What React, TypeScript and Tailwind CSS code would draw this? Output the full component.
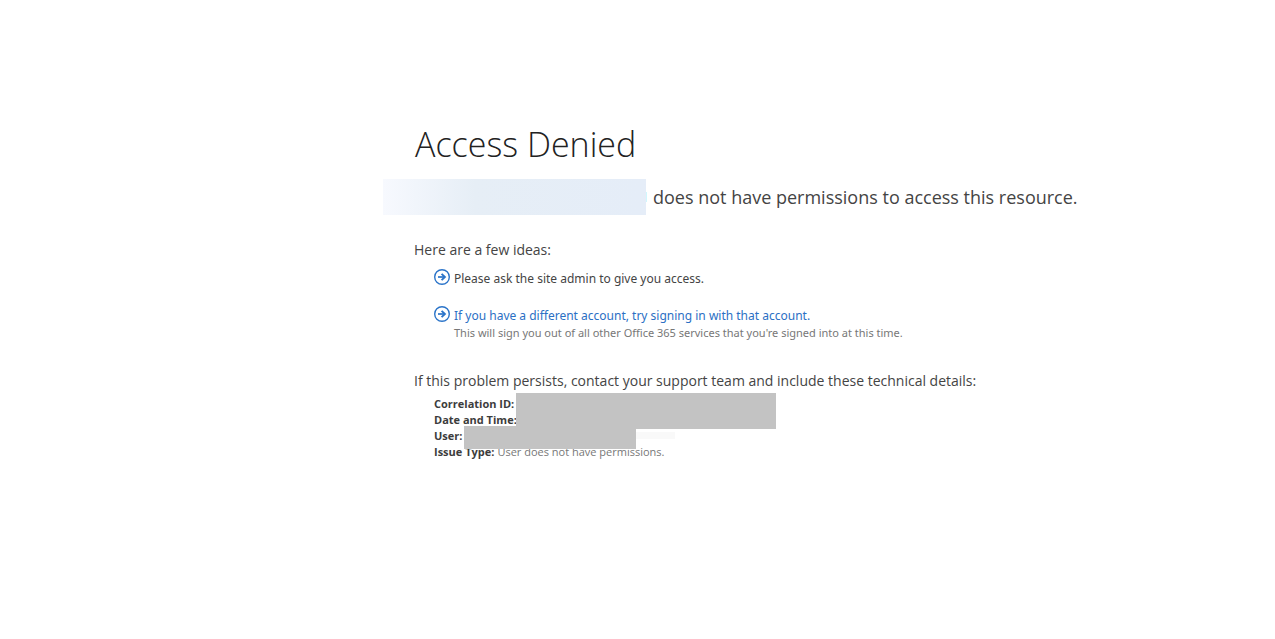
const detail = "font-bold text-[#3c3c3c]";

function ArrowIcon() {
  return (
    <svg viewBox="0 0 16 16" className="h-4 w-4 shrink-0" fill="none" stroke="#2b74c9" aria-hidden="true">
      <circle cx="8" cy="8" r="7.3" strokeWidth="1.4" />
      <path d="M4 8h7" strokeWidth="1.7" />
      <path d="M7.6 4.9 10.9 8l-3.3 3.1" strokeWidth="1.9" />
    </svg>
  );
}

export default function App() {
  return (
    <main className="min-h-screen bg-white pt-[119px] pl-[383px] font-['Open_Sans','Noto_Sans',sans-serif] text-[#444444]">
      <h1 className="pl-8 text-[34px] leading-[50px] font-light text-[#222222]">Access Denied</h1>
      <div className="mt-[10px] flex h-9 items-center gap-[6px] text-[18px]">
        <div className="flex items-center">
          <span className="h-9 w-[263px] bg-linear-to-r from-[#f7f9fe] via-[#e6eef6] via-35% to-[#e5edf8]" />
          <span className="h-[10px] w-px bg-[#d0f7fd]" />
        </div>
        <p>does not have permissions to access this resource.</p>
      </div>
      <section className="mt-6 pl-[31px]">
        <h2 className="text-[14px] leading-[22px]">Here are a few ideas:</h2>
        <ul className="mt-2 pl-5 font-['Noto_Sans','Open_Sans',sans-serif]">
          <li className="flex gap-1 text-[12px] leading-5">
            <ArrowIcon />
            Please ask the site admin to give you access.
          </li>
          <li className="mt-[17px] flex gap-1 text-[12px] leading-5">
            <ArrowIcon />
            <div>
              <a href="#signin" className="block text-[#2b6fc4]">If you have a different account, try signing in with that account.</a>
              <p className="text-[11px] leading-[14px] text-[#777777]">This will sign you out of all other Office 365 services that you're signed into at this time.</p>
            </div>
          </li>
        </ul>
      </section>
      <section className="mt-[30px] pl-[31px]">
        <h2 className="text-[14px] leading-[22px]">If this problem persists, contact your support team and include these technical details:</h2>
        <dl className="relative mt-1 pl-5 text-[11px] leading-4">
          <dt className={detail}>Correlation ID:</dt>
          <dt className={detail}>Date and Time:</dt>
          <dt className={detail}>User:</dt>
          <div className="flex gap-[3px]">
            <dt className={detail}>Issue Type:</dt>
            <dd className="text-[#777777]">User does not have permissions.</dd>
          </div>
          <span className="absolute -top-[3px] left-[102px] h-9 w-[260px] bg-[#c3c3c3]" />
          <span className="absolute top-[30px] left-[50px] h-[23px] w-[172px] bg-[#c3c3c3]" />
          <span className="absolute top-9 left-[222px] h-[7px] w-[39px] bg-[#f9f9f9]" />
        </dl>
      </section>
    </main>
  );
}
